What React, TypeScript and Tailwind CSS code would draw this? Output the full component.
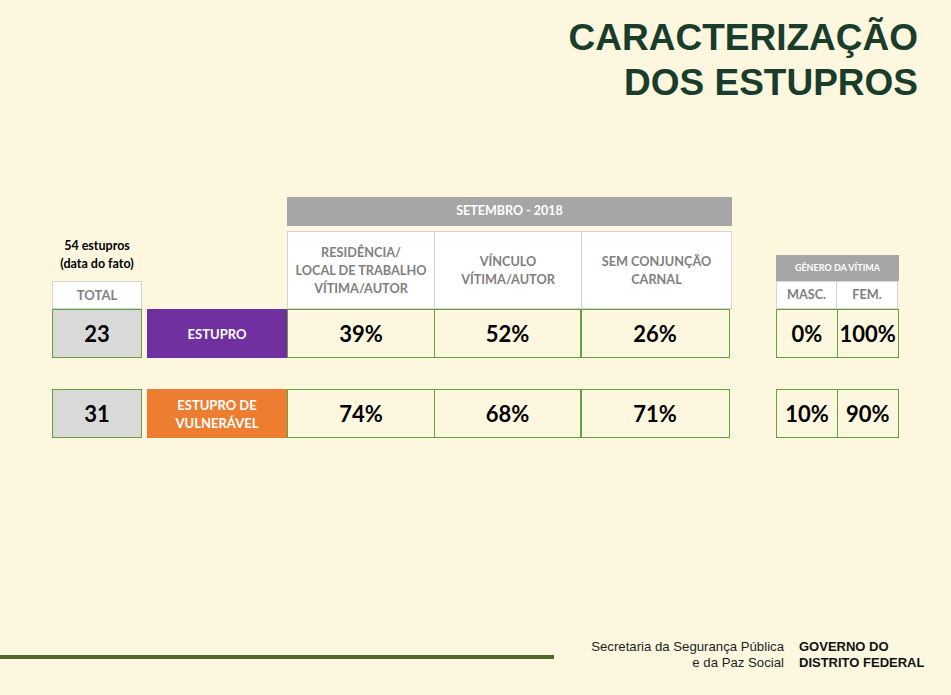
import React from "react";

const cal = "font-['Lato','Open_Sans',sans-serif]";

function HeadCell({ w, children }: { w: string; children: React.ReactNode }) {
  return (
    <div className={`${w} h-full flex items-center justify-center text-center bg-white border border-[#d4d4d4] -ml-px first:ml-0 text-[#808080] font-bold text-[12.7px] leading-[18px]`}>
      {children}
    </div>
  );
}

function DataCell({ w, v, first }: { w: string; v: string; first?: boolean }) {
  return (
    <div className={`${w} h-full flex items-center justify-center border-[1.5px] border-[#5ea33c] ${first ? "" : "-ml-[1.5px]"} text-black font-bold text-[22px]`}>
      {v}
    </div>
  );
}

function Row({ total, label, labelBg, vals, gender }: { total: string; label: React.ReactNode; labelBg: string; vals: string[]; gender: string[] }) {
  return (
    <div className="flex h-[49px]">
      <div className="w-[90px] h-full flex items-center justify-center bg-[#d9d9d9] border-[1.5px] border-[#5ea33c] font-bold text-[22px] text-black">
        {total}
      </div>
      <div className={`ml-[5px] w-[140px] h-full flex items-center justify-center text-center text-white font-bold text-[13px] leading-[18px] ${labelBg}`}>
        {label}
      </div>
      <div className="flex h-full">
        <DataCell w="w-[148px]" v={vals[0]} first />
        <DataCell w="w-[148px]" v={vals[1]} />
        <DataCell w="w-[150px]" v={vals[2]} />
      </div>
      <div className="ml-[46px] flex h-full">
        <DataCell w="w-[62px]" v={gender[0]} first />
        <DataCell w="w-[62.5px]" v={gender[1]} />
      </div>
    </div>
  );
}

export default function App() {
  return (
    <div className={`w-[951px] h-[695px] bg-[#fdf7e0] flex flex-col overflow-hidden ${cal}`}>
      <div className="flex justify-end pr-[33px] pt-[15px]">
        <h1 className="text-right font-['Liberation_Sans',Arial,sans-serif] font-bold text-[37px] leading-[45px] text-[#1a3d2b]">
          CARACTERIZAÇÃO
          <br />
          DOS ESTUPROS
        </h1>
      </div>

      <div className="mt-[92px] pl-[52px] flex flex-col">
        <div className="flex h-[112px] items-end">
          <div className="w-[90px] flex flex-col items-center">
            <div className="text-center text-black font-bold text-[12.5px] leading-[18px]">
              54 estupros
              <br />
              (data do fato)
            </div>
            <div className="mt-[8px] w-full h-[28px] bg-white border border-[#d4d4d4] flex items-center justify-center text-[#808080] font-bold text-[13px] pt-[2px]">
              TOTAL
            </div>
          </div>
          <div className="ml-[145px] w-[445px] h-full flex flex-col">
            <div className="h-[29px] bg-[#a6a6a6] flex items-center justify-center text-white font-bold text-[12.5px]">
              SETEMBRO - 2018
            </div>
            <div className="mt-[5px] h-[78px] flex">
              <HeadCell w="w-[148px]">
                RESIDÊNCIA/
                <br />
                LOCAL DE TRABALHO
                <br />
                VÍTIMA/AUTOR
              </HeadCell>
              <HeadCell w="w-[148px]">
                VÍNCULO
                <br />
                VÍTIMA/AUTOR
              </HeadCell>
              <HeadCell w="w-[151px]">
                SEM CONJUNÇÃO
                <br />
                CARNAL
              </HeadCell>
            </div>
          </div>
          <div className="ml-[44px] w-[123px] flex flex-col">
            <div className="h-[26px] bg-[#a6a6a6] flex items-center justify-center text-white font-bold text-[9px]">
              GÊNERO DA VÍTIMA
            </div>
            <div className="h-[28px] flex">
              <div className="w-[61px] h-full bg-white border border-[#d4d4d4] flex items-center justify-center text-[#808080] font-bold text-[12.7px]">
                MASC.
              </div>
              <div className="w-[62px] -ml-px h-full bg-white border border-[#d4d4d4] flex items-center justify-center text-[#808080] font-bold text-[12.7px]">
                FEM.
              </div>
            </div>
          </div>
        </div>

        <Row total="23" label="ESTUPRO" labelBg="bg-[#7030a0]" vals={["39%", "52%", "26%"]} gender={["0%", "100%"]} />
        <div className="h-[31px]" />
        <Row
          total="31"
          label={
            <>
              ESTUPRO DE
              <br />
              VULNERÁVEL
            </>
          }
          labelBg="bg-[#ed7d31]"
          vals={["74%", "68%", "71%"]}
          gender={["10%", "90%"]}
        />
      </div>

      <div className="mt-[201px] flex items-center h-[32px] font-['Liberation_Sans',Arial,sans-serif]">
        <div className="w-[554px] h-[4px] mt-[3px] bg-[#4e6a2a]" />
        <div className="flex-1" />
        <div className="text-right text-[13.2px] leading-[16px] text-[#1e1e1e]">
          Secretaria da Segurança Pública
          <br />
          e da Paz Social
        </div>
        <div className="ml-[15px] w-[128px] mr-[24px] whitespace-nowrap font-bold text-[13px] leading-[16px] text-[#111]">
          GOVERNO DO
          <br />
          DISTRITO FEDERAL
        </div>
      </div>
    </div>
  );
}
